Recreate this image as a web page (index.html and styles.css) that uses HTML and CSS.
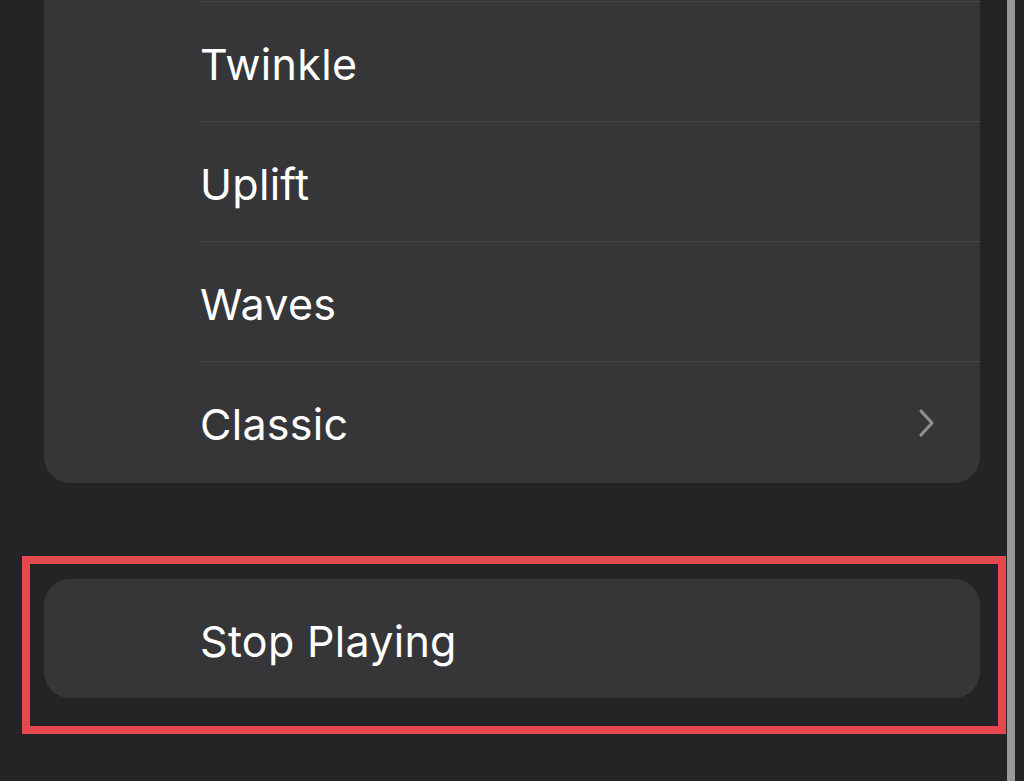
FILE: index.html
```html
<!DOCTYPE html>
<html lang="en">
<head>
<meta charset="utf-8">
<title>Sounds</title>
<link rel="stylesheet" href="styles.css">
</head>
<body>
<div class="screen">
  <div class="content">
    <div class="card list">
      <div class="row"><span class="label">Twinkle</span></div>
      <div class="row"><span class="label">Uplift</span></div>
      <div class="row"><span class="label">Waves</span></div>
      <div class="row last"><span class="label">Classic</span>
        <svg class="chevron" width="18" height="30" viewBox="0 0 18 30" aria-hidden="true"><path d="M3 3 L14 15 L3 27" fill="none" stroke="#8d8d92" stroke-width="3.2" stroke-linecap="round" stroke-linejoin="round"/></svg>
      </div>
    </div>
    <div class="stop-wrap">
      <div class="card stop"><span class="label">Stop Playing</span></div>
      <div class="highlight"></div>
    </div>
  </div>
  <div class="scrollbar"></div>
  <div class="edge"></div>
</div>
</body>
</html>
```
FILE: styles.css
```css
html, body {
  margin: 0;
  padding: 0;
  background: #232325;
}
body {
  font-family: Inter, "Noto Sans", "Liberation Sans", sans-serif;
  color: #ffffff;
  -webkit-font-smoothing: antialiased;
}
.screen {
  display: flex;
  width: 1024px;
  height: 781px;
  overflow: hidden;
}
.content {
  flex: 1;
  padding: 0 27px 0 44px;
  display: flex;
  flex-direction: column;
  background: #242426;
}
.card {
  background: #363638;
  border-radius: 26px;
}
.list {
  border-top-left-radius: 0;
  border-top-right-radius: 0;
  padding-top: 1px;
  padding-bottom: 2px;
}
.row {
  margin-left: 156px;
  height: 119px;
  border-top: 1px solid #48484b;
  display: flex;
  align-items: center;
  padding-right: 44px;
}
.label {
  font-size: 43px;
  font-weight: 400;
  letter-spacing: 0.3px;
  flex: 1;
  padding-top: 4px;
}
.chevron {
  display: block;
  margin-top: 2px;
}
.stop-wrap {
  position: relative;
  margin-top: 96px;
}
.stop {
  height: 119px;
  display: flex;
  align-items: center;
  padding-left: 156px;
}
.highlight {
  position: absolute;
  left: -22px;
  right: -26px;
  top: -23px;
  bottom: -36px;
  border: 8px solid #e5484e;
  pointer-events: none;
}
.scrollbar {
  width: 8px;
  background: #98989b;
}
.edge {
  width: 9px;
  background: #232325;
}
```
